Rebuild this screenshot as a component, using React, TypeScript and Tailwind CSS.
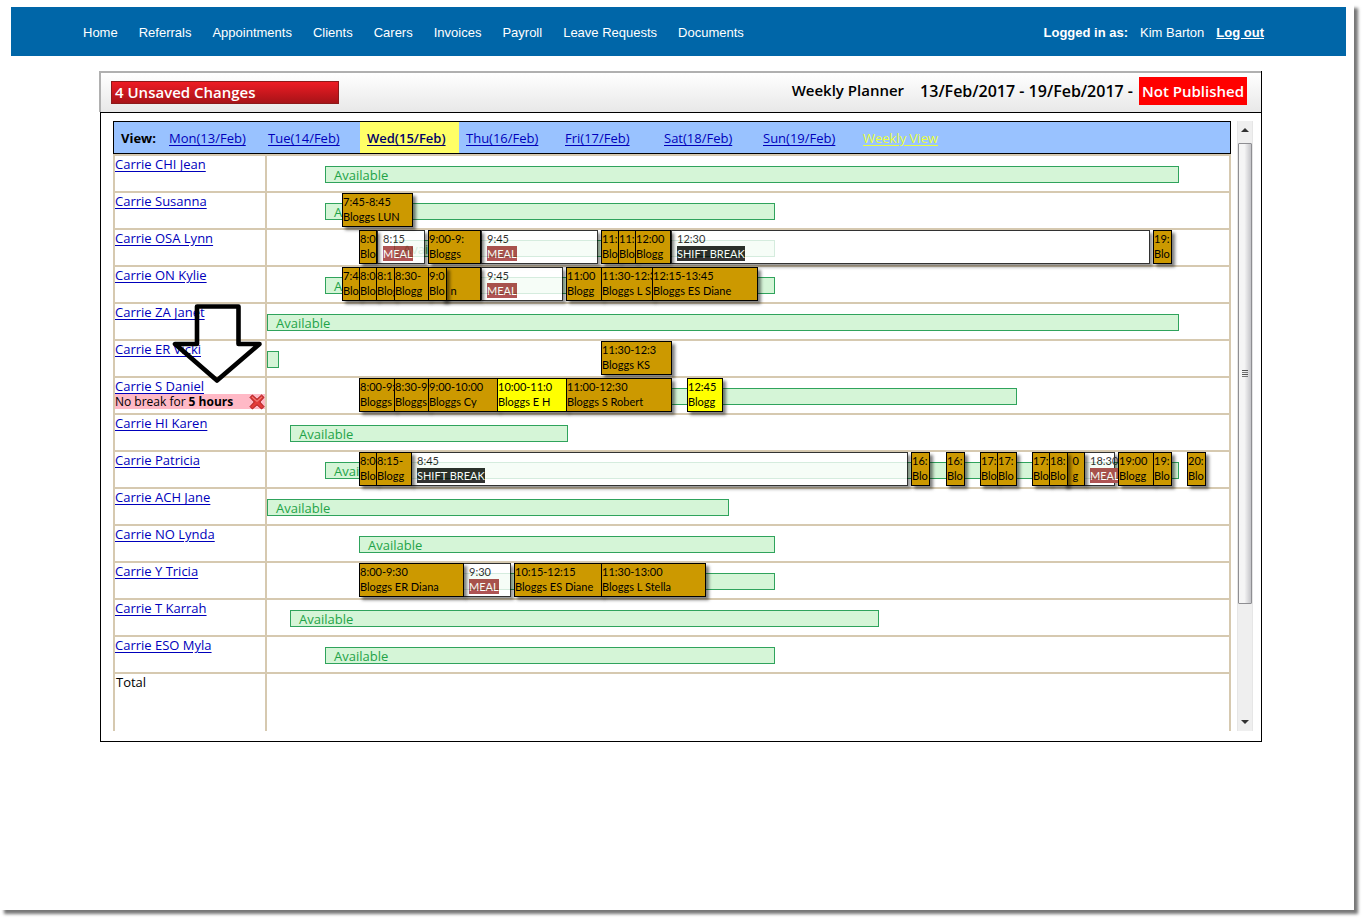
import { clsx } from 'clsx';

type BlockKind = 'visit' | 'changed' | 'break';

interface Block {
  from: number;
  to: number;
  time: string;
  text: string;
  kind?: BlockKind;
}

interface CarerRow {
  name: string;
  available?: { from: number; to: number; label?: boolean };
  blocks?: Block[];
  warning?: boolean;
}

const navItems = [
  'Home',
  'Referrals',
  'Appointments',
  'Clients',
  'Carers',
  'Invoices',
  'Payroll',
  'Leave Requests',
  'Documents'
];

const days = [
  'Mon(13/Feb)',
  'Tue(14/Feb)',
  'Wed(15/Feb)',
  'Thu(16/Feb)',
  'Fri(17/Feb)',
  'Sat(18/Feb)',
  'Sun(19/Feb)'
];

// from / to are offsets along the timeline, later blocks are drawn on top
const rows: CarerRow[] = [
  { name: 'Carrie CHI Jean', available: { from: 58, to: 912, label: true } },
  {
    name: 'Carrie Susanna',
    available: { from: 58, to: 508, label: true },
    blocks: [{ from: 75, to: 146, time: '7:45-8:45', text: 'Bloggs LUN' }]
  },
  {
    name: 'Carrie OSA Lynn',
    available: { from: 127, to: 508, label: true },
    blocks: [
      { from: 110, to: 158, time: '8:15', text: 'MEAL', kind: 'break' },
      { from: 92, to: 110, time: '8:0', text: 'Blo' },
      { from: 214, to: 331, time: '9:45', text: 'MEAL', kind: 'break' },
      { from: 161, to: 214, time: '9:00-9:', text: 'Bloggs' },
      { from: 404, to: 883, time: '12:30', text: 'SHIFT BREAK', kind: 'break' },
      { from: 334, to: 352, time: '11:', text: 'Blo' },
      { from: 351, to: 369, time: '11:', text: 'Blo' },
      { from: 368, to: 404, time: '12:00', text: 'Blogg' },
      { from: 886, to: 905, time: '19:', text: 'Blo' }
    ]
  },
  {
    name: 'Carrie ON Kylie',
    available: { from: 58, to: 508, label: true },
    blocks: [
      { from: 75, to: 93, time: '7:4', text: 'Blo' },
      { from: 92, to: 110, time: '8:0', text: 'Blo' },
      { from: 109, to: 128, time: '8:1', text: 'Blog' },
      { from: 214, to: 296, time: '9:45', text: 'MEAL', kind: 'break' },
      { from: 127, to: 162, time: '8:30-', text: 'Blogg' },
      { from: 174, to: 214, time: '', text: '   n' },
      { from: 161, to: 180, time: '9:0', text: 'Blo' },
      { from: 299, to: 335, time: '11:00', text: 'Blogg' },
      { from: 334, to: 386, time: '11:30-12:3', text: 'Bloggs L S' },
      { from: 385, to: 491, time: '12:15-13:45', text: 'Bloggs ES Diane' }
    ]
  },
  { name: 'Carrie ZA Janet', available: { from: 0, to: 912, label: true } },
  {
    name: 'Carrie ER Vicki',
    available: { from: 0, to: 12 },
    blocks: [{ from: 334, to: 405, time: '11:30-12:3', text: 'Bloggs KS' }]
  },
  {
    name: 'Carrie S Daniel',
    available: { from: 300, to: 750 },
    warning: true,
    blocks: [
      { from: 92, to: 128, time: '8:00-9:', text: 'Bloggs' },
      { from: 127, to: 162, time: '8:30-9', text: 'Bloggs' },
      { from: 161, to: 231, time: '9:00-10:00', text: 'Bloggs Cy' },
      { from: 230, to: 300, time: '10:00-11:0', text: 'Bloggs E H', kind: 'changed' },
      { from: 299, to: 405, time: '11:00-12:30', text: 'Bloggs S Robert' },
      { from: 420, to: 456, time: '12:45', text: 'Blogg', kind: 'changed' }
    ]
  },
  { name: 'Carrie HI Karen', available: { from: 23, to: 301, label: true } },
  {
    name: 'Carrie Patricia',
    available: { from: 58, to: 912, label: true },
    blocks: [
      { from: 144, to: 641, time: '8:45', text: 'SHIFT BREAK', kind: 'break' },
      { from: 92, to: 110, time: '8:0', text: 'Blo' },
      { from: 109, to: 145, time: '8:15-', text: 'Blogg' },
      { from: 644, to: 663, time: '16:', text: 'Blo' },
      { from: 679, to: 698, time: '16:', text: 'Blo' },
      { from: 713, to: 731, time: '17:', text: 'Blo' },
      { from: 730, to: 750, time: '17:', text: 'Blo' },
      { from: 817, to: 848, time: '18:30', text: 'MEAL', kind: 'break' },
      { from: 796, to: 818, time: '   0', text: '   g' },
      { from: 765, to: 783, time: '17:', text: 'Blo' },
      { from: 782, to: 801, time: '18:', text: 'Blo' },
      { from: 851, to: 887, time: '19:00', text: 'Blogg' },
      { from: 886, to: 905, time: '19:', text: 'Blo' },
      { from: 920, to: 939, time: '20:', text: 'Blo' }
    ]
  },
  { name: 'Carrie ACH Jane', available: { from: 0, to: 462, label: true } },
  { name: 'Carrie NO Lynda', available: { from: 92, to: 508, label: true } },
  {
    name: 'Carrie Y Tricia',
    available: { from: 92, to: 508 },
    blocks: [
      { from: 196, to: 244, time: '9:30', text: 'MEAL', kind: 'break' },
      { from: 92, to: 197, time: '8:00-9:30', text: 'Bloggs ER Diana' },
      { from: 247, to: 335, time: '10:15-12:15', text: 'Bloggs ES Diane' },
      { from: 334, to: 439, time: '11:30-13:00', text: 'Bloggs L Stella' }
    ]
  },
  { name: 'Carrie T Karrah', available: { from: 23, to: 612, label: true } },
  { name: 'Carrie ESO Myla', available: { from: 58, to: 508, label: true } }
];

function TimelineBlock({ block }: { block: Block }) {
  const kind = block.kind ?? 'visit';
  return (
    <div
      className={clsx(
        "absolute top-0 h-[34px] whitespace-pre border font-['Lato',sans-serif] text-[11px] leading-[15px] shadow-[3px_3px_3px_#00000080]",
        kind === 'visit' && 'overflow-hidden border-black bg-[#cc9900] text-black',
        kind === 'changed' && 'overflow-hidden border-black bg-[#ffff00] text-black',
        kind === 'break' && 'border-black bg-white pl-[5px] text-black opacity-80'
      )}
      style={{ left: block.from, width: block.to - block.from }}
    >
      <div className="h-[15px]">{block.time}</div>
      {kind === 'break' ? (
        <span
          className={clsx(
            'inline-block text-white',
            block.text === 'MEAL' ? 'bg-[#9c2a2a]' : 'bg-black'
          )}
        >
          {block.text}
        </span>
      ) : (
        <div>{block.text}</div>
      )}
    </div>
  );
}

function DeleteIcon() {
  return (
    <svg viewBox="0 0 16 16" className="size-4">
      <path
        d="M1 3.4 3.4 1 8 5.3 12.6 1 15 3.4 10.8 8 15 12.6 12.6 15 8 10.8 3.4 15 1 12.6 5.3 8Z"
        fill="#e23c3a"
        stroke="#a81818"
        strokeWidth="1"
        strokeLinejoin="round"
      />
      <path d="m3.2 3 4.8 4.4L12.8 3" fill="none" stroke="#f49a94" strokeWidth="1" />
    </svg>
  );
}

function Header() {
  return (
    <header className="ml-[11px] mr-2 flex h-[49px] items-center justify-between bg-[#0066a8] pl-[72px] pr-[82px] pt-0.5 font-['Liberation_Sans',sans-serif] text-[13px] text-white">
      <nav className="flex gap-[21px]">
        {navItems.map((item) => (
          <a key={item} href="#">
            {item}
          </a>
        ))}
      </nav>
      <div className="flex gap-3">
        <b>Logged in as:</b>
        <span>Kim Barton</span>
        <a href="#" className="font-bold underline">
          Log out
        </a>
      </div>
    </header>
  );
}

function DayBar() {
  return (
    <nav className="flex h-[33px] items-stretch border border-black bg-[#99c2ff] text-[13px]">
      <b className="flex w-12 items-center pl-[7px] pt-0.5">View:</b>
      {days.map((day, i) => (
        <a
          key={day}
          href="#"
          className={clsx(
            'flex w-[99px] items-center pl-[7px] pt-0.5 underline underline-offset-2',
            i === 2 ? 'bg-[#ffff66] font-semibold text-[#000066]' : 'text-[#0000bb]'
          )}
        >
          {day}
        </a>
      ))}
      <a href="#" className="flex items-center pl-2 pt-0.5 text-[#eaff3c] underline underline-offset-2">
        Weekly View
      </a>
    </nav>
  );
}

function Planner() {
  return (
    <div className="relative min-w-0 flex-1">
      <DayBar />
      <table className="w-full table-fixed border-separate border-spacing-0 text-[13px] leading-4">
        <colgroup>
          <col className="w-[152px]" />
          <col />
        </colgroup>
        <tbody>
          {rows.map((row) => (
            <tr key={row.name}>
              <td className="h-[37px] border-l-2 border-t-2 border-[#d6c9b0] p-0 align-top">
                <a href="#" className="block text-[#0000bb] underline underline-offset-2">
                  {row.name}
                </a>
                {row.warning && (
                  <div className="flex h-[15px] items-center justify-between bg-[#ffb9c6] text-[12px] leading-[15px]">
                    <span className="flex gap-[3px] whitespace-nowrap">
                      <span>No break for</span>
                      <b>5 hours</b>
                    </span>
                    <button type="button" aria-label="Dismiss warning">
                      <DeleteIcon />
                    </button>
                  </div>
                )}
              </td>
              <td className="border-x-2 border-t-2 border-[#d6c9b0] p-0 align-top">
                <div className="relative h-[35px]">
                  {row.available && (
                    <div
                      className="absolute top-[10px] h-[17px] overflow-hidden border border-[#2fa35c] bg-[#d5f5d7] pl-2 text-[#1fa348]"
                      style={{
                        left: row.available.from,
                        width: row.available.to - row.available.from
                      }}
                    >
                      {row.available.label && 'Available'}
                    </div>
                  )}
                  {row.blocks?.map((block) => (
                    <TimelineBlock key={block.from} block={block} />
                  ))}
                </div>
              </td>
            </tr>
          ))}
          <tr>
            <td className="h-[59px] border-l-2 border-t-2 border-[#d6c9b0] p-0 pl-px align-top">Total</td>
            <td className="border-x-2 border-t-2 border-[#d6c9b0] p-0" />
          </tr>
        </tbody>
      </table>
      {/* Callout arrow pointing at the break warning */}
      <svg viewBox="0 0 92 82" className="pointer-events-none absolute left-[59px] top-[182px] h-[82px] w-[92px]">
        <path
          d="M25 3.500H66.500V41H87.500L45 77.500 3 41H25Z"
          fill="none"
          stroke="#000"
          strokeWidth="4.600"
          strokeLinejoin="round"
        />
      </svg>
    </div>
  );
}

function ScrollBar() {
  return (
    <div className="flex w-4 flex-col border-x border-[#e6e6e6] bg-[#efefef]">
      <button type="button" aria-label="Scroll up" className="flex h-[22px] items-center justify-center pb-1">
        <svg viewBox="0 0 8 4" className="h-1 w-2">
          <path d="M4 0 8 4H0Z" fill="#333" />
        </svg>
      </button>
      <div className="flex h-[461px] flex-col items-center justify-center gap-px rounded-[1px] border border-[#8e8e92] bg-linear-to-r from-[#f5f5f5] from-45% to-[#c4c4c8]">
        <i className="h-px w-[6px] bg-[#555]" />
        <i className="h-px w-[6px] bg-[#777]" />
        <i className="h-px w-[6px] bg-[#555]" />
        <i className="h-px w-[6px] bg-[#777]" />
      </div>
      <button type="button" aria-label="Scroll down" className="mt-auto flex h-[18px] items-center justify-center">
        <svg viewBox="0 0 8 4" className="h-1 w-2">
          <path d="M0 0H8L4 4Z" fill="#333" />
        </svg>
      </button>
    </div>
  );
}

export default function App() {
  return (
    <div className="min-h-screen bg-white pr-[14px] pt-1">
      <div className="min-h-[906px] bg-white pt-[3px] shadow-[4px_4px_3px_#777777]">
        <Header />
        <main className="ml-[99px] mr-[92px] mt-[15px] border-r border-black font-['Open_Sans',sans-serif] text-black">
          <div className="flex h-[41px] items-center justify-between border-l-2 border-t-2 border-[#b0b0b0] bg-linear-to-b from-white to-[#e8e8e8] pl-[10px] pr-[14px] text-[15px] font-semibold">
            <div className="flex h-[23px] w-[228px] items-center border border-[#8c1a1a] bg-linear-to-b from-[#ee1c24] to-[#a81318] pl-[3px] text-white">
              4 Unsaved Changes
            </div>
            <div className="flex items-center pb-1">
              <span>Weekly Planner</span>
              <span className="ml-4 text-base">13/Feb/2017 - 19/Feb/2017 -</span>
              <span className="ml-[6px] bg-[#ff0000] px-[3px] leading-7 text-white">Not Published</span>
            </div>
          </div>
          <div className="ml-px flex gap-[6px] border-y border-l border-black pb-[10px] pl-3 pr-2 pt-2">
            <Planner />
            <ScrollBar />
          </div>
        </main>
      </div>
    </div>
  );
}
